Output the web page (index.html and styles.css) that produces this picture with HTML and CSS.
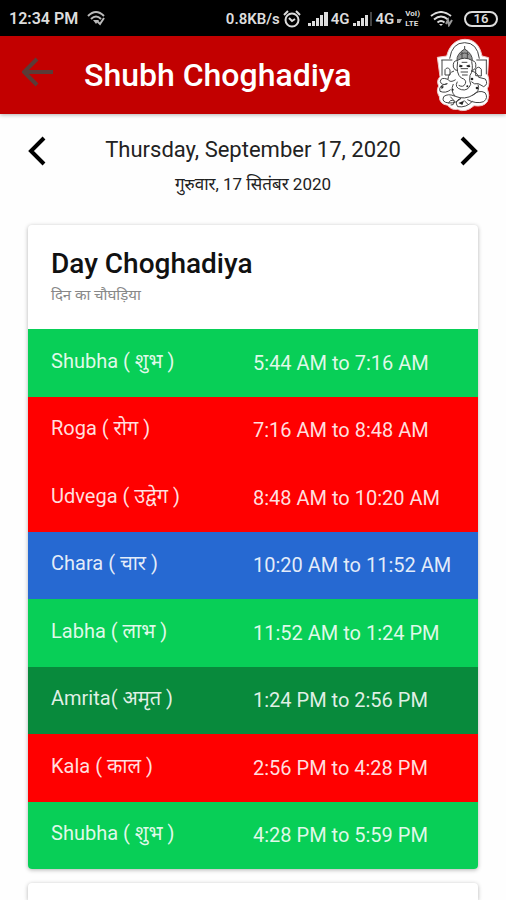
FILE: index.html
```html
<!DOCTYPE html>
<html lang="en">
  <head>
    <meta charset="UTF-8" />
    <meta name="viewport" content="width=device-width, initial-scale=1.0" />
    <title>Shubh Choghadiya</title>
    <link rel="stylesheet" href="styles.css">
  </head>
  <body>
    <!-- status bar -->
    <div class="status-bar">
      <span class="clock">12:34 PM</span>
      <svg class="icon-share" width="19" height="15" viewBox="0 0 19 15" fill="none" stroke="#bbb" stroke-width="2">
        <path d="M1 5Q9 -3 17 5M4 8Q9 3 14 8" />
        <path d="M6 9h6l-3 4z" fill="#bbb" stroke="none" />
        <path d="M10 10l3 3 4-6" />
      </svg>
      <div class="status-right">
        <span>0.8KB/s</span>
        <svg width="18" height="18" viewBox="0 0 18 18" fill="none" stroke="#ddd" stroke-width="2">
          <circle cx="9" cy="10" r="6.5" />
          <path d="M1 5l4-4M17 5l-4-4M6 8l3 3 3-2" />
        </svg>
        <svg class="signal" width="20" height="15" viewBox="0 0 20 15" fill="#ddd">
          <path d="M0 12h3v3H0zM4 10h3v5H4zM8 7h3v8H8zM12 4h3v11h-3zM16 1h4v14h-4z" />
        </svg>
        <span>4G</span>
        <svg class="signal narrow" width="19" height="15" viewBox="0 0 19 15" fill="#ddd">
          <path d="M0 12h3v3H0zM4 10h3v5H4zM8 7h3v8H8zM12 4h3v11h-3z" />
          <path d="M17 1h2v14h-2z" fill="#444" />
        </svg>
        <span>4G</span>
        <svg width="5" height="15" viewBox="0 0 5 15">
          <path d="M0 8h5l-2 4H0z" fill="#aaa" />
        </svg>
        <span class="volte"><span>VoI)</span><span>LTE</span></span>
        <svg class="icon-wifi" width="24" height="16" viewBox="0 0 24 16" fill="none" stroke="#ddd" stroke-width="2">
          <path d="M1 5Q11 -3 21 5M4 8.5Q11 2.5 18 8.5M7.500 11.5Q11 8.5 14.5 11.5" />
          <path d="M9 13h4l-2 2z" fill="#ddd" stroke="none" />
          <path d="M16 13l2-4 1 5 3-5" stroke="#999" />
        </svg>
        <span class="battery">16</span>
      </div>
    </div>

    <header class="app-bar">
      <button class="back" type="button" aria-label="Back">
        <svg width="32" height="30" viewBox="0 0 32 30" fill="none" stroke="#5b3b37" stroke-width="4">
          <path d="M31 15H3M15 2L2 15l13 13" />
        </svg>
      </button>
      <h1>Shubh Choghadiya</h1>
      <svg class="ganesha" width="54" height="74" viewBox="30 14 162 222">
        <path d="M34 72L62 68C70 36 90 18 117 18S162 36 168 68L188 73 185 124Q193 150 184 166Q193 186 184 205Q172 222 144 217Q118 240 94 228Q76 231 65 216Q40 212 40 190Q29 172 38 158Q30 142 42 130Z" fill="#fff" stroke="#eec6c6" stroke-width="3" />
        <g fill="none" stroke="#444" stroke-width="3">
          <path d="M71 76Q78 28 116 28T160 76M46 80h33M151 80h32M48 80v47M181 80v43" />
          <path d="M93 82Q91 62 116 47Q140 62 139 82Q116 67 93 82Z" fill="#999" />
          <path d="M103 64Q116 54 128 64M108 76v-20M124 76v-20M116 47v-9" />
          <path d="M93 82Q80 82 82 101Q85 112 96 112M139 82Q152 83 149 103Q145 112 136 111" />
          <path d="M95 84Q89 122 106 134Q123 139 118 151Q112 164 98 156M137 84Q143 112 132 126Q129 143 134 153Q126 174 106 169Q84 163 94 145" />
          <path d="M100 95l10 3M121 98l10-3M107 87h17M104 106h22M104 116h22M108 125h17" />
          <path d="M84 113Q67 118 66 138Q72 150 89 139M66 138Q43 130 43 145Q47 158 64 151M64 151Q36 156 42 174Q59 181 74 169" />
          <path d="M57 125V109Q64 99 72 109V125ZM149 127V107Q158 96 166 108V128ZM135 113Q154 116 158 132L178 137Q188 153 173 160L157 151Q145 155 136 145" />
          <path d="M82 152Q72 174 88 189Q116 201 143 184Q163 173 156 153M88 189Q66 179 53 190Q45 207 69 209Q91 210 105 195" />
          <path d="M139 186Q159 168 177 178Q188 193 173 205Q151 213 124 199M105 195Q83 202 95 220Q121 224 139 204" />
          <path d="M68 210Q72 196 86 204Q83 218 74 215M73 190l12 13M114 201l13 13" />
        </g>
        <g fill="#222">
          <ellipse cx="104" cy="99" rx="5" ry="3" /><ellipse cx="128" cy="99" rx="5" ry="3" />
          <circle cx="138" cy="137" r="4" /><circle cx="153" cy="164" r="4" />
          <circle cx="80" cy="169" r="3" /><circle cx="124" cy="159" r="3" />
          <path d="M97 209l17-7-5 13zM45 157l9 3-7 8z" />
        </g>
      </svg>
    </header>

    <main>
      <!-- date picker -->
      <div class="date-nav">
        <button class="arrow" type="button" aria-label="Previous day">
          <svg width="18" height="30" viewBox="0 0 18 30"><path d="M16 2L3 15l13 13" /></svg>
        </button>
        <div class="date">
          <div class="date-en">Thursday, September 17, 2020</div>
          <div class="date-hi" lang="hi">गुरुवार, 17 सितंबर 2020</div>
        </div>
        <button class="arrow" type="button" aria-label="Next day">
          <svg width="18" height="30" viewBox="0 0 18 30"><path d="M2 2l13 13L2 28" /></svg>
        </button>
      </div>

      <section class="card">
        <div class="card-head">
          <h2>Day Choghadiya</h2>
          <p lang="hi">दिन का चौघड़िया</p>
        </div>
        <table class="choghadiya">
          <tr class="green"><th scope="row">Shubha ( शुभ )</th><td>5:44 AM to 7:16 AM</td></tr>
          <tr class="red"><th scope="row">Roga ( रोग )</th><td>7:16 AM to 8:48 AM</td></tr>
          <tr class="red"><th scope="row">Udvega ( उद्वेग )</th><td>8:48 AM to 10:20 AM</td></tr>
          <tr class="blue"><th scope="row">Chara ( चार )</th><td>10:20 AM to 11:52 AM</td></tr>
          <tr class="green"><th scope="row">Labha ( लाभ )</th><td>11:52 AM to 1:24 PM</td></tr>
          <tr class="dark-green"><th scope="row">Amrita( अमृत )</th><td>1:24 PM to 2:56 PM</td></tr>
          <tr class="red"><th scope="row">Kala ( काल )</th><td>2:56 PM to 4:28 PM</td></tr>
          <tr class="green"><th scope="row">Shubha ( शुभ )</th><td>4:28 PM to 5:59 PM</td></tr>
        </table>
      </section>

      <section class="card next-card"></section>
    </main>
  </body>
</html>
```
FILE: styles.css
```css
* {
  box-sizing: border-box;
}

body {
  margin: 0;
  min-height: 100vh;
  display: flex;
  flex-direction: column;
  background: #fefefe;
  color: #222;
  font-family: Roboto, "Noto Sans", sans-serif;
}

h1,
h2,
p {
  margin: 0;
}

button {
  padding: 0;
  border: 0;
  background: none;
  cursor: pointer;
}

svg {
  display: block;
  flex: none;
}

/* status bar */
.status-bar {
  flex: none;
  display: flex;
  align-items: center;
  height: 36px;
  padding: 1px 8px 0 9px;
  background: #000;
  color: #ddd;
  font-size: 16px;
  font-weight: 600;
}

.icon-share {
  margin-left: 9px;
}

.status-right {
  display: flex;
  align-items: center;
  gap: 3px;
  margin-left: auto;
  font-size: 15px;
}

.signal {
  margin-left: 4px;
}

.narrow {
  margin-left: 1px;
}

.volte {
  display: flex;
  flex-direction: column;
  font-size: 8px;
  line-height: 10px;
  font-weight: 700;
}

.icon-wifi {
  margin: 0 7px;
}

.battery {
  width: 34px;
  height: 16px;
  border: 2px solid #ddd;
  border-radius: 8px;
  font-size: 13px;
  line-height: 12px;
  text-align: center;
}

/* app bar */
.app-bar {
  flex: none;
  display: flex;
  align-items: center;
  height: 78px;
  padding: 0 16px 0 22px;
  background: #c20000;
  box-shadow: 0 1px 4px rgba(0, 0, 0, 0.3);
}

.back {
  padding-bottom: 6px;
}

.app-bar h1 {
  margin-left: 30px;
  color: #fff;
  font-size: 32px;
  font-weight: 500;
}

.ganesha {
  margin-left: auto;
}

main {
  flex: 1;
  display: flex;
  flex-direction: column;
  padding: 20px 28px 0;
}

.date-nav {
  display: flex;
  align-items: flex-start;
  justify-content: space-between;
  height: 91px;
}

.arrow {
  padding-top: 2px;
}

.arrow path {
  fill: none;
  stroke: #000;
  stroke-width: 4;
}

.date {
  text-align: center;
}

.date-en {
  font-size: 22px;
  line-height: 32px;
}

.date-hi {
  margin-top: 6px;
  font-size: 17px;
  line-height: 24px;
}

/* cards */
.card {
  margin-bottom: 14px;
  border-radius: 4px;
  overflow: hidden;
  background: #fff;
  box-shadow: 0 1px 4px rgba(0, 0, 0, 0.3);
}

.card-head {
  height: 104px;
  padding: 20px 23px 0;
}

.card-head h2 {
  color: #111;
  font-size: 28px;
  line-height: 38px;
  font-weight: 500;
}

.card-head p {
  color: #888;
  font-size: 15px;
  line-height: 24px;
}

.choghadiya {
  width: 100%;
  height: 540px;
  border-collapse: collapse;
  table-layout: fixed;
  color: rgba(255, 255, 255, 0.88);
  font-size: 20px;
  line-height: 24px;
}

.choghadiya th,
.choghadiya td {
  padding: 0;
  font-weight: 400;
  text-align: left;
}

.choghadiya th {
  padding: 0 0 4px 23px;
}

.green {
  background: #08cf57;
}

.red {
  background: #ff0000;
}

.blue {
  background: #2669d2;
}

.dark-green {
  background: #088a3c;
}

.next-card {
  flex: 1;
  margin-bottom: 0;
  border-radius: 4px 4px 0 0;
}
```
